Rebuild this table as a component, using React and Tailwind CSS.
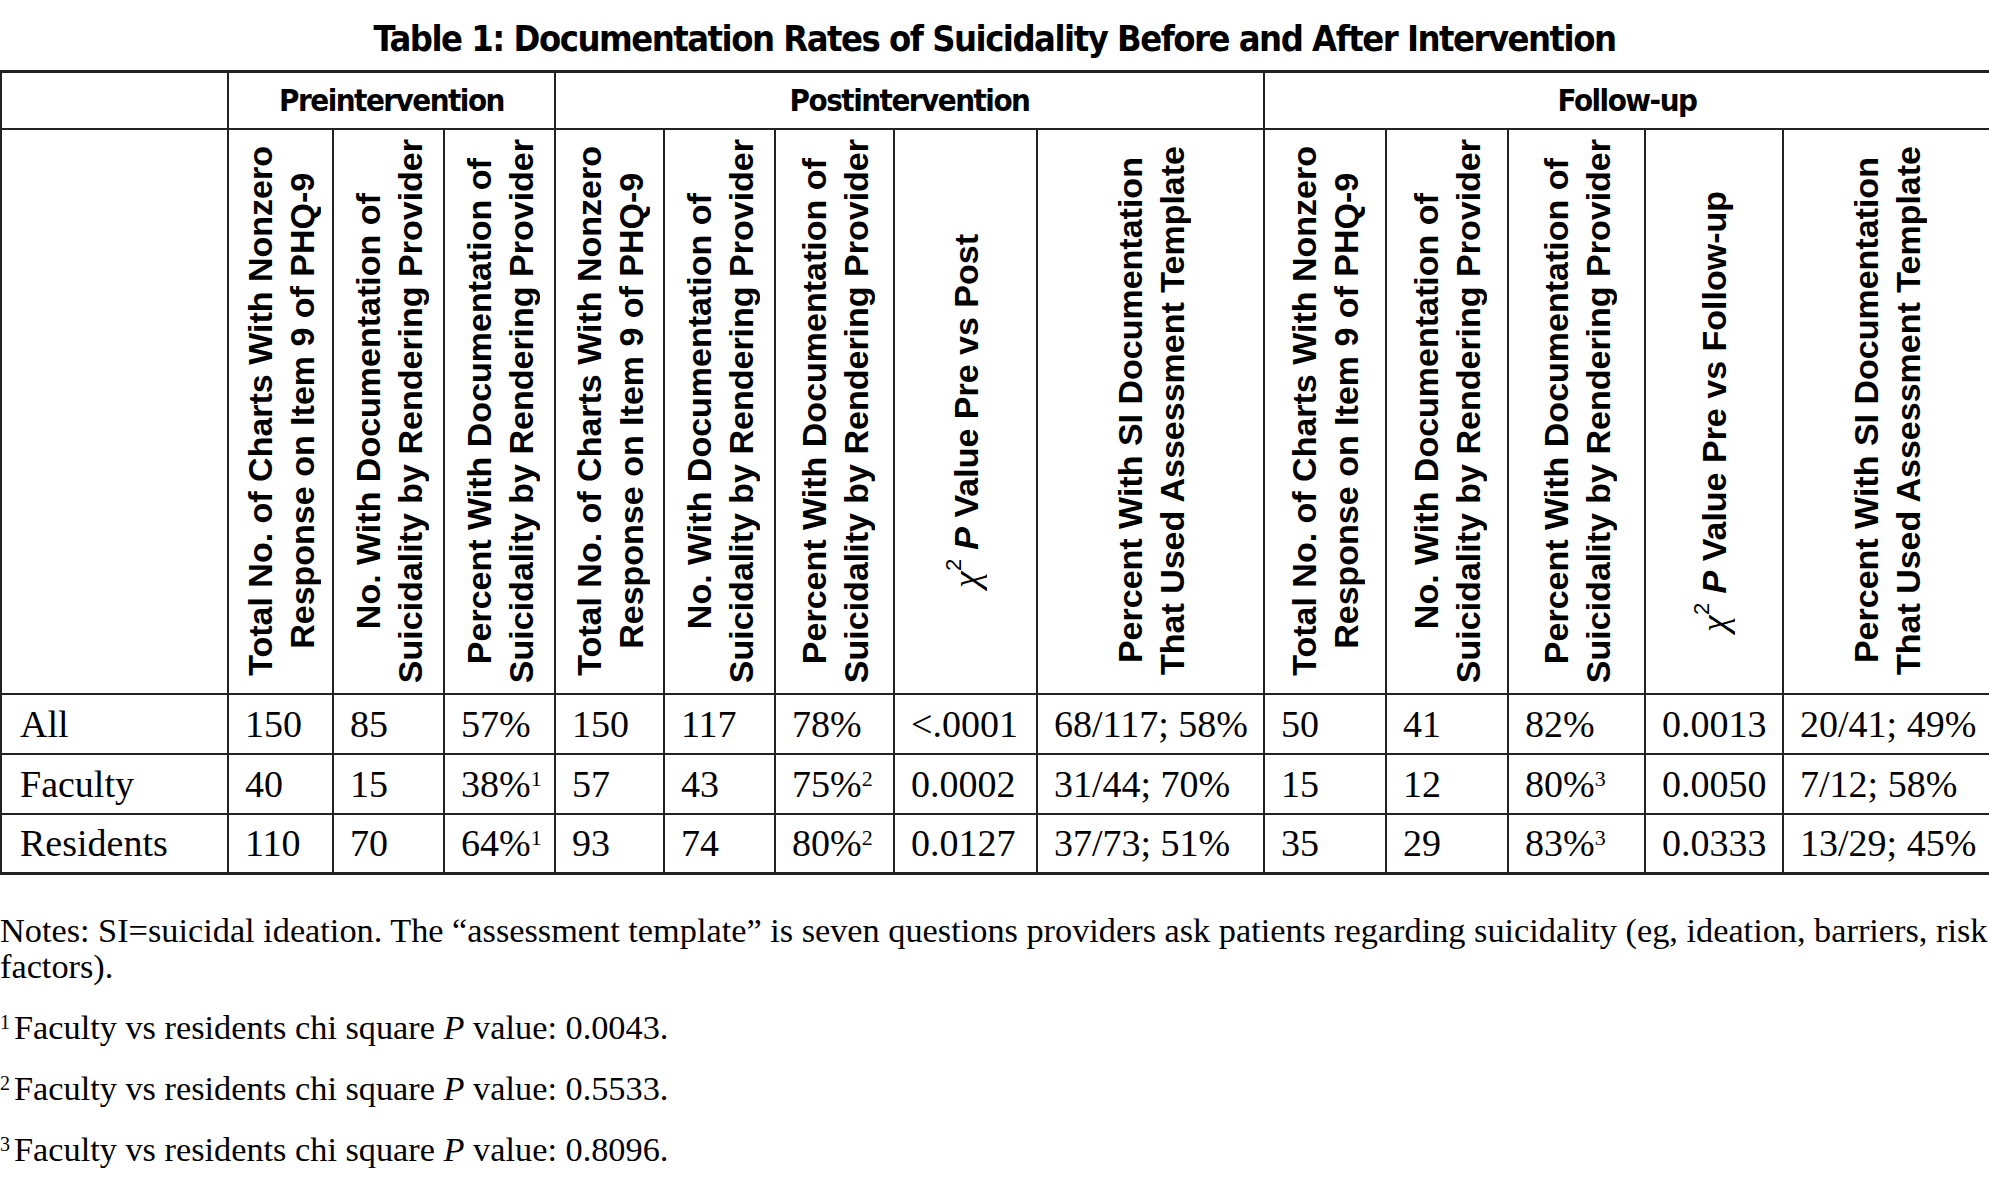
import React from "react";

const colWidths = [
  "w-[227px]", "w-[105px]", "w-[111px]", "w-[111px]", "w-[109px]", "w-[111px]", "w-[119px]",
  "w-[143px]", "w-[227px]", "w-[122px]", "w-[122px]", "w-[137px]", "w-[138px]", "w-[207px]",
];

const charts = ["Total No. of Charts With Nonzero", "Response on Item 9 of PHQ-9"];
const withDoc = ["No. With Documentation of", "Suicidality by Rendering Provider"];
const pctDoc = ["Percent With Documentation of", "Suicidality by Rendering Provider"];
const template = ["Percent With SI Documentation", "That Used Assessment Template"];

const headers = [
  charts, withDoc, pctDoc,
  charts, withDoc, pctDoc, { chi: "Pre vs Post" }, template,
  charts, withDoc, pctDoc, { chi: "Pre vs Follow-up" }, template,
];

const rows = [
  {
    label: "All",
    cells: ["150", "85", "57%", "150", "117", "78%", "<.0001", "68/117; 58%", "50", "41", "82%", "0.0013", "20/41; 49%"],
  },
  {
    label: "Faculty",
    cells: ["40", "15", ["38%", "1"], "57", "43", ["75%", "2"], "0.0002", "31/44; 70%", "15", "12", ["80%", "3"], "0.0050", "7/12; 58%"],
  },
  {
    label: "Residents",
    cells: ["110", "70", ["64%", "1"], "93", "74", ["80%", "2"], "0.0127", "37/73; 51%", "35", "29", ["83%", "3"], "0.0333", "13/29; 45%"],
  },
];

const footnotes = [
  ["1", "0.0043."],
  ["2", "0.5533."],
  ["3", "0.8096."],
];

const condensed = "font-['Liberation_Sans_Narrow','DejaVu_Sans_Condensed','Liberation_Sans',sans-serif] font-bold tracking-[-1.5px]";
const sans = "font-['Liberation_Sans',Arial,sans-serif] font-bold";
const serif = "font-['Liberation_Serif','Times_New_Roman',serif]";

function RotatedHeader({ h }) {
  return (
    <th className="border-2 border-[#222] p-0 align-middle">
      <div className="flex h-[563px] items-center justify-center">
        <div className={`[writing-mode:vertical-rl] rotate-180 whitespace-nowrap text-center text-[34px] leading-[42px] text-black ${sans}`}>
          {Array.isArray(h) ? (
            <>
              {h[0]}
              <br />
              {h[1]}
            </>
          ) : (
            <>
              <span className={`${serif} text-[38px] font-normal italic`}>χ</span>
              <sup className="top-0 align-super text-[22px] font-normal">2</sup> <span className="italic">P</span> Value {h.chi}
            </>
          )}
        </div>
      </div>
    </th>
  );
}

function Cell({ value }) {
  return (
    <td className="border-2 border-[#222] pl-4 pr-1 text-left align-middle whitespace-nowrap">
      {Array.isArray(value) ? (
        <>
          {value[0]}
          <sup className="text-[22px]">{value[1]}</sup>
        </>
      ) : (
        value
      )}
    </td>
  );
}

export default function App() {
  return (
    <div className="min-h-screen w-full overflow-hidden bg-white text-black">
      <h1 className={`pt-[15px] pb-[7px] text-center text-[36px] leading-[48px] ${condensed}`}>
        Table 1: Documentation Rates of Suicidality Before and After Intervention
      </h1>

      <table className="w-full table-fixed border-collapse border-t-[3px] border-b-[3px] border-[#222]">
        <colgroup>
          {colWidths.map((w, i) => (
            <col key={i} className={w} />
          ))}
        </colgroup>
        <thead>
          <tr className="h-[57px]">
            <th className="border-2 border-[#222]"></th>
            <th colSpan={3} className={`border-2 border-[#222] text-center text-[31px] ${condensed}`}>
              Preintervention
            </th>
            <th colSpan={5} className={`border-2 border-[#222] text-center text-[31px] ${condensed}`}>
              Postintervention
            </th>
            <th colSpan={5} className={`border-2 border-[#222] text-center text-[31px] ${condensed}`}>
              Follow-up
            </th>
          </tr>
          <tr>
            <th className="border-2 border-[#222]"></th>
            {headers.map((h, i) => (
              <RotatedHeader key={i} h={h} />
            ))}
          </tr>
        </thead>
        <tbody className={`text-[38px] leading-[44px] ${serif}`}>
          {rows.map((r) => (
            <tr key={r.label} className="h-[60px]">
              <td className="border-2 border-[#222] pl-[18px] text-left align-middle">{r.label}</td>
              {r.cells.map((c, i) => (
                <Cell key={i} value={c} />
              ))}
            </tr>
          ))}
        </tbody>
      </table>

      <div className={`text-[34.3px] leading-[36px] ${serif}`}>
        <p className="mt-[37px] whitespace-nowrap">
          Notes: SI=suicidal ideation. The “assessment template” is seven questions providers ask patients regarding suicidality (eg, ideation, barriers, risk
          <br />
          factors).
        </p>
        {footnotes.map(([n, v]) => (
          <p key={n} className="mt-[25px] whitespace-nowrap">
            <sup className="mr-[4px] text-[20px]">{n}</sup>Faculty vs residents chi square <span className="italic">P</span> value: {v}
          </p>
        ))}
      </div>
    </div>
  );
}
